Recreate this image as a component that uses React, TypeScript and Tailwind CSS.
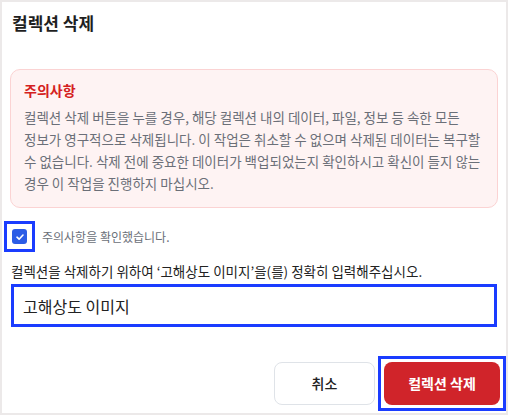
import React from 'react';

const font = { fontFamily: '"Noto Sans CJK KR", "Noto Sans", sans-serif' };

export default function App() {
    return (
        <div className="w-[508px] h-[415px] bg-[#ece9e9] p-[2px]" style={font}>
            <div className="h-full bg-white flex flex-col">
                {/* Header */}
                <h1 className="px-[10px] pt-[9px] text-[17px] font-bold text-[#1f1f1f] leading-[24px]">컬렉션 삭제</h1>

                {/* Warning */}
                <div className="mx-[8px] mt-[34px] rounded-[10px] border border-[#fbd3d3] bg-[#fef3f3] px-[13px] pt-[10px] pb-[13px]">
                    <p className="text-[14px] font-bold text-[#d42020] leading-[20px]">주의사항</p>
                    <p className="mt-[6px] text-[13.5px] text-[#6b6f78] leading-[22px]">
                        컬렉션 삭제 버튼을 누를 경우, 해당 컬렉션 내의 데이터, 파일, 정보 등 속한 모든<br />
                        정보가 영구적으로 삭제됩니다. 이 작업은 취소할 수 없으며 삭제된 데이터는 복구할<br />
                        수 없습니다. 삭제 전에 중요한 데이터가 백업되었는지 확인하시고 확신이 들지 않는<br />
                        경우 이 작업을 진행하지 마십시오.
                    </p>
                </div>

                {/* Checkbox */}
                <div className="mt-[13px] flex items-center gap-[7px] pl-[2px]">
                    <div className="w-[31px] h-[31px] border-[3px] border-[#1a3cff] flex items-center justify-center">
                        <div className="w-[15px] h-[15px] rounded-[3px] bg-[#2b5ce6] flex items-center justify-center">
                            <svg width="10" height="10" viewBox="0 0 10 10" fill="none">
                                <path d="M2 5.2 L4.1 7.2 L8 3" stroke="white" strokeWidth="1.6" strokeLinecap="round" strokeLinejoin="round" />
                            </svg>
                        </div>
                    </div>
                    <span className="text-[12px] text-[#6b6f78]">주의사항을 확인했습니다.</span>
                </div>

                {/* Confirm input */}
                <p className="mt-[9px] px-[9px] text-[13.5px] text-[#222] leading-[20px]">
                    컬렉션을 삭제하기 위하여 ‘고해상도 이미지’을(를) 정확히 입력해주십시오.
                </p>
                <div className="mx-[9px] mt-[3px] h-[43px] border-[3px] border-[#1a3cff] flex items-center px-[9px]">
                    <span className="text-[16px] text-[#222]">고해상도 이미지</span>
                </div>

                {/* Actions */}
                <div className="mt-auto mb-[2px] flex justify-end items-center gap-[3px]">
                    <button className="w-[101px] h-[43px] rounded-[8px] border border-[#dfe3e8] bg-white text-[14px] font-medium text-[#222]">취소</button>
                    <div className="border-[3px] border-[#1a3cff] p-[3px]">
                        <button className="w-[116px] h-[43px] rounded-[8px] bg-[#d0242a] text-[14px] font-semibold text-white">컬렉션 삭제</button>
                    </div>
                </div>
            </div>
        </div>
    );
}
